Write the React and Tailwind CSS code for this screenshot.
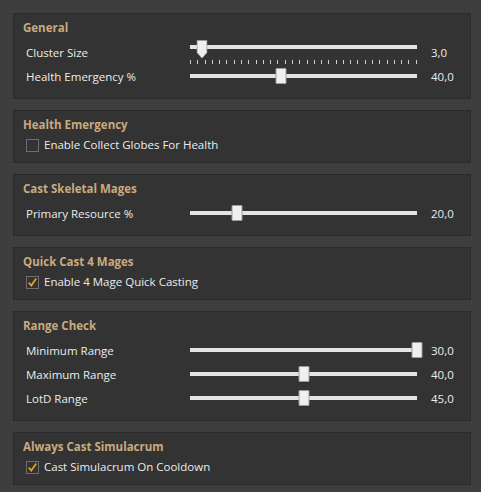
const FONT = "font-['Open_Sans','Liberation_Sans',sans-serif]";

const TICKS = Array.from({ length: 32 }, (_, i) => i);

function Thumb({ pointed }) {
  if (pointed) {
    return (
      <svg width="11" height="19" viewBox="0 0 11 19" className="block">
        <path
          d="M0.5 0.5 H10.5 V12.5 L5.5 18.2 L0.5 12.5 Z"
          fill="#efefef"
          stroke="#9c9c9c"
        />
      </svg>
    );
  }
  return (
    <div className="w-[11px] h-[16px] bg-[#efefef] border border-[#9c9c9c] rounded-[1px]" />
  );
}

function Slider({ pos, ticks }) {
  if (ticks) {
    return (
      <div className="relative w-[227px] h-full flex flex-col">
        <div className="mt-[4px] h-[4px] w-full bg-[#e4e4e4]" />
        <div className="mt-[11px] h-[4px] flex justify-between">
          {TICKS.map((t) => (
            <span key={t} className="w-px h-full bg-[#d0d0d0]" />
          ))}
        </div>
        <div
          className="absolute top-[-1px] -translate-x-1/2"
          style={{ left: `${pos * 100}%` }}
        >
          <Thumb pointed />
        </div>
      </div>
    );
  }
  return (
    <div className="relative w-[227px] h-full flex items-center">
      <div className="h-[4px] w-full bg-[#e4e4e4] -mt-[2px]" />
      <div
        className="absolute top-1/2 -translate-x-1/2 -translate-y-[9px]"
        style={{ left: `${pos * 100}%` }}
      >
        <Thumb />
      </div>
    </div>
  );
}

function SliderRow({ label, value, pos, ticks }) {
  return (
    <div className="flex items-center h-6 pl-[12px]">
      <span className="w-[164px] shrink-0">{label}</span>
      <Slider pos={pos} ticks={ticks} />
      <span className="ml-[14px]">{value}</span>
    </div>
  );
}

function CheckRow({ label, checked }) {
  return (
    <div className="flex items-center h-5 pl-[12px]">
      <span className="w-[13px] h-[13px] border border-[#6f6f6f] flex items-center justify-center">
        {checked && (
          <svg width="11" height="11" viewBox="0 0 11 11">
            <path
              d="M1.8 5.6 L4.3 8.6 L9.2 1.6"
              fill="none"
              stroke="#e2a623"
              strokeWidth="1.7"
            />
          </svg>
        )}
      </span>
      <span className="ml-[5px]">{label}</span>
    </div>
  );
}

function Panel({ title, children, slim }) {
  return (
    <section
      className={`bg-[#333333] border border-[#2a2a2a] pt-[4px] ${
        slim ? "pb-[7px]" : "pb-[9px]"
      }`}
    >
      <h2 className="h-5 flex items-center pl-[9px] font-bold text-[#c9aa7f]">
        {title}
      </h2>
      <div className={slim ? "" : "mt-[3px]"}>{children}</div>
    </section>
  );
}

export default function App() {
  return (
    <div
      className={`w-[481px] h-[492px] bg-[#3e3e3e] pt-[13px] pl-[13px] pr-[10px] flex flex-col gap-[11px] text-[11.5px] text-[#ececec] ${FONT}`}
    >
      <Panel title="General">
        <SliderRow label="Cluster Size" value="3,0" pos={0.053} ticks />
        <SliderRow label="Health Emergency %" value="40,0" pos={0.403} />
      </Panel>
      <Panel title="Health Emergency" slim>
        <CheckRow label="Enable Collect Globes For Health" />
      </Panel>
      <Panel title="Cast Skeletal Mages">
        <SliderRow label="Primary Resource %" value="20,0" pos={0.205} />
      </Panel>
      <Panel title="Quick Cast 4 Mages" slim>
        <CheckRow label="Enable 4 Mage Quick Casting" checked />
      </Panel>
      <Panel title="Range Check">
        <SliderRow label="Minimum Range" value="30,0" pos={1} />
        <SliderRow label="Maximum Range" value="40,0" pos={0.5} />
        <SliderRow label="LotD Range" value="45,0" pos={0.5} />
      </Panel>
      <Panel title="Always Cast Simulacrum" slim>
        <CheckRow label="Cast Simulacrum On Cooldown" checked />
      </Panel>
    </div>
  );
}
